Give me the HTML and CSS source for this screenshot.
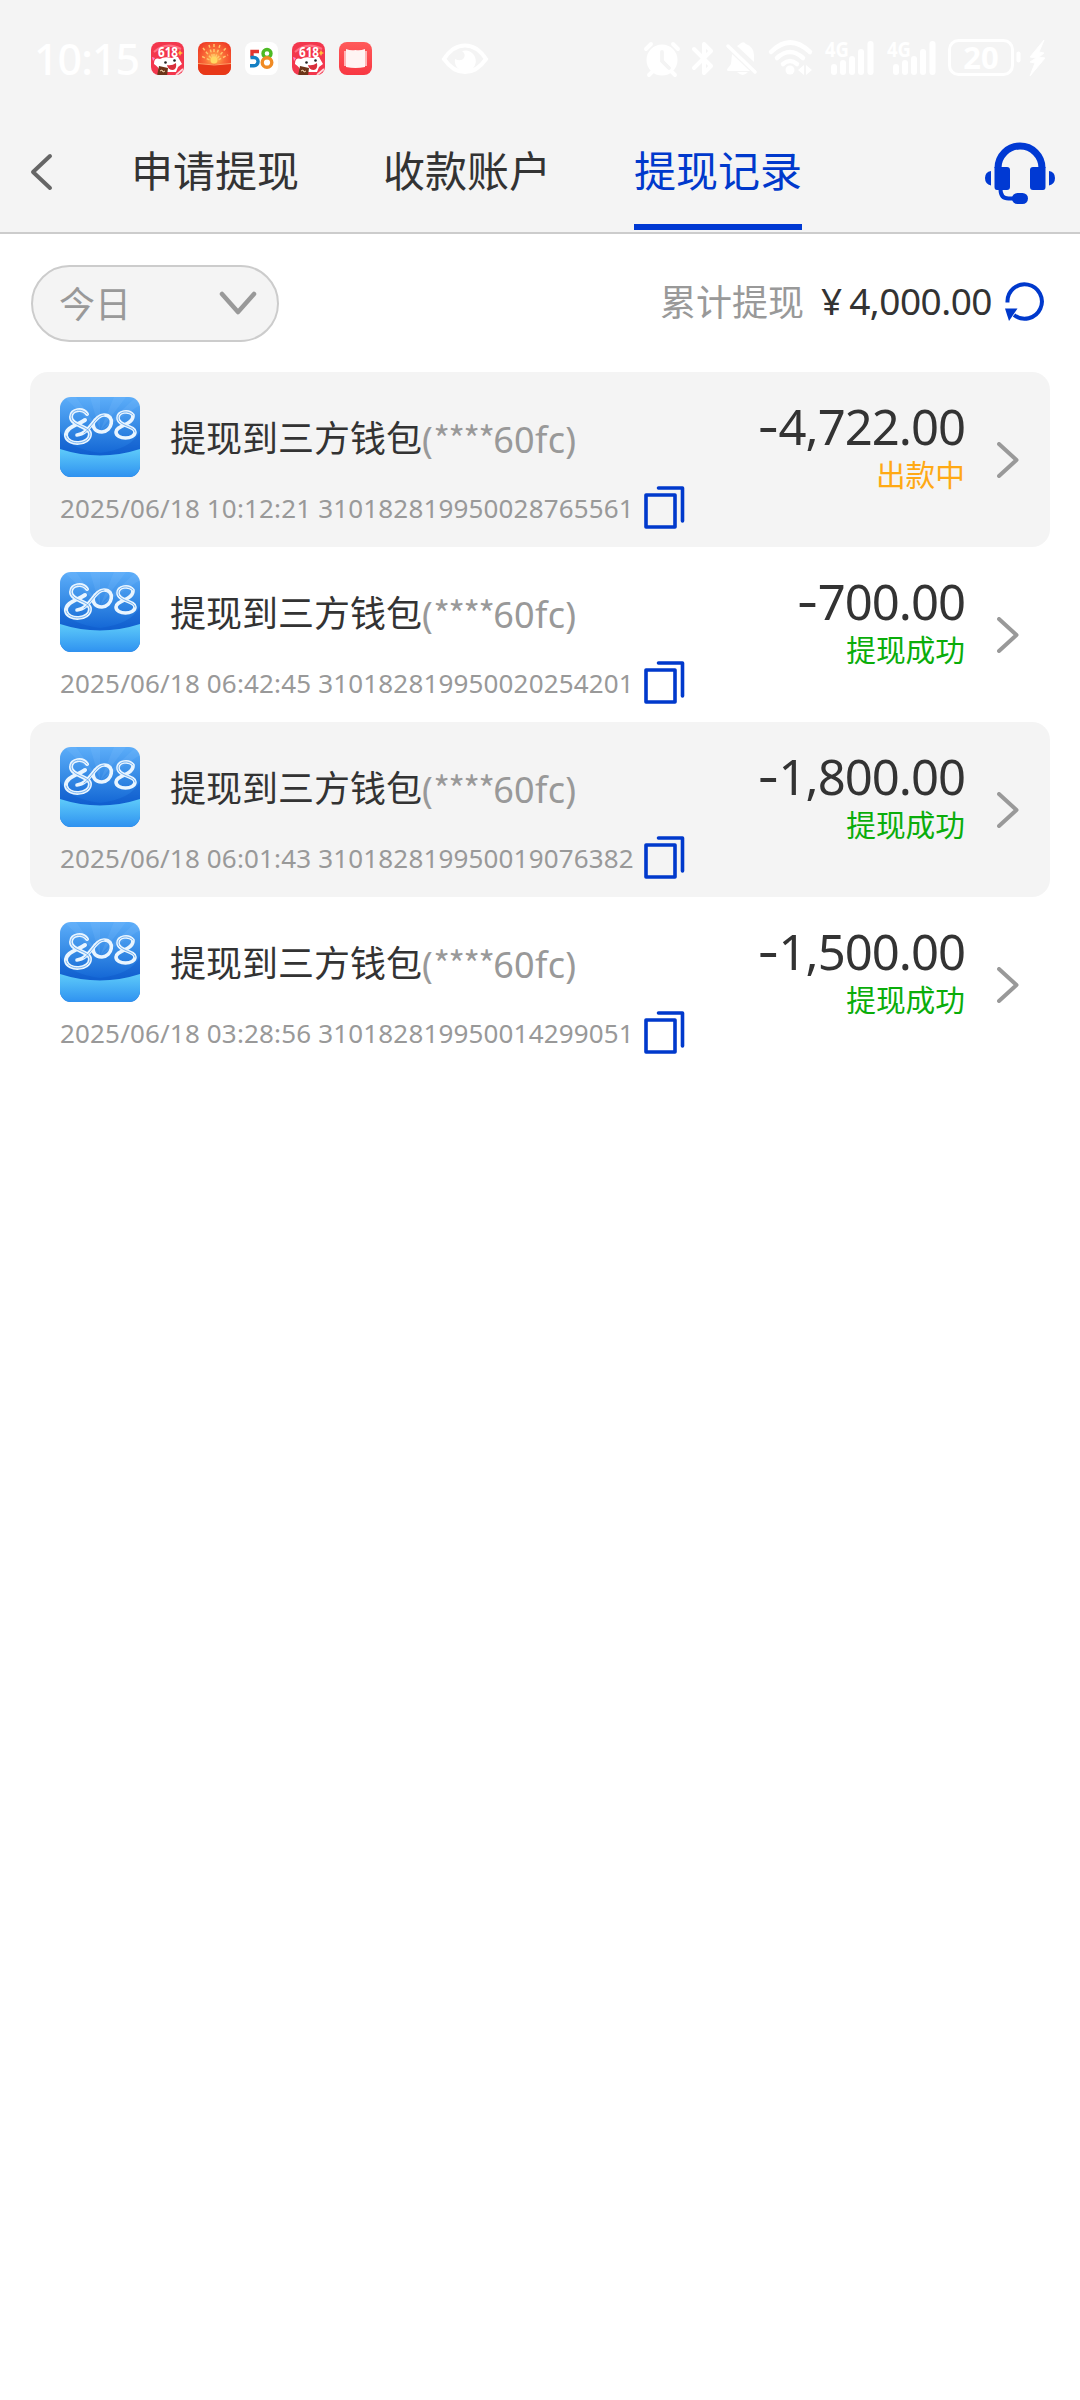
FILE: index.html
```html
<!DOCTYPE html>
<html lang="zh-CN">
<head>
<meta charset="utf-8">
<title>提现记录</title>
<link rel="stylesheet" href="styles.css">
</head>
<body>
<svg class="defs" width="0" height="0" aria-hidden="true">
  <defs>
    <linearGradient id="sky" x1="0" y1="0" x2="0" y2="1"><stop offset="0" stop-color="#5cadf9"/><stop offset=".4" stop-color="#3388e4"/><stop offset=".7" stop-color="#1568d6"/><stop offset="1" stop-color="#1568d6"/></linearGradient>
    <linearGradient id="sea" x1="0" y1="0" x2="0" y2="1"><stop offset="0" stop-color="#5ecbfa"/><stop offset="1" stop-color="#2f92f0"/></linearGradient>
    <linearGradient id="red" x1="0" y1="0" x2="0" y2="1"><stop offset="0" stop-color="#ff5a5a"/><stop offset="1" stop-color="#f83742"/></linearGradient>
    <radialGradient id="gold" cx=".5" cy=".5" r=".6"><stop offset="0" stop-color="#ffc04d"/><stop offset=".5" stop-color="#fa6a38"/><stop offset="1" stop-color="#ee3a24"/></radialGradient>
    <clipPath id="tile"><rect width="80" height="80" rx="11"/></clipPath>
    <clipPath id="app"><rect width="33" height="33" rx="8"/></clipPath>
  </defs>
  <symbol id="wallet" viewBox="0 0 80 80">
    <g clip-path="url(#tile)">
      <rect width="80" height="80" fill="url(#sky)"/>
      <path d="M40 34L4 0h12zM40 34L30 0h10zM40 34L54 0h12zM40 34L76 0h4v8z" fill="#8ccaff" opacity=".16"/>
      <path d="M0 34q8 18 40 22Q72 52 80 34v30H0z" fill="#0a50c4" opacity=".3"/>
      <path d="M0 52q40 13 80 0v28H0z" fill="url(#sea)"/>
      <g fill="none" stroke="#e9f5ff" stroke-linecap="round">
        <path d="M27 17c-4-6-16-5-16 3 0 9 19 9 19 17 0 11-22 12-24 2-1-9 12-11 19-16" stroke-width="4"/>
        <path d="M17 38c13-1 17-20 27-20 12 0 8 17-2 17-8 0-11-7-7-12" stroke-width="3.600"/>
        <path d="M73 18c-4-5-15-4-15 3 0 8 17 8 17 14 0 8-19 8-19 0 0-7 18-7 17-17" stroke-width="3.600"/>
        <path d="M27 17c-4-6-16-5-16 3 0 9 19 9 19 17 0 11-22 12-24 2M24 36c7-4 12-18 20-18M73 18c-4-5-15-4-15 3 0 8 17 8 17 14" stroke="#4b98e8" stroke-width=".7"/>
      </g>
    </g>
  </symbol>
  <symbol id="copy" viewBox="0 0 41 43">
    <g fill="none" stroke="#0039cc" stroke-width="3.600" stroke-linecap="round" stroke-linejoin="round"><rect x="2" y="9" width="29" height="32"/><path d="M14.500 2H38.500V35"/></g>
  </symbol>
  <symbol id="chevron" viewBox="0 0 22 36"><path d="M2 2L19.500 18 2 34" fill="none" stroke="#999" stroke-width="4" stroke-linecap="round" stroke-linejoin="round"/></symbol>
  <symbol id="promo" viewBox="0 0 33 33">
    <g clip-path="url(#app)">
      <rect width="33" height="33" fill="#f3374d"/>
      <path d="M3 10Q15-1 30 7" stroke="#ff7082" stroke-width="2" fill="none"/>
      <path d="M3 22q0-7 6-5 4-3 12-1 3-2 6-1l4 7-4 3-2 5H9q-1-5-6-8z" fill="#fff"/>
      <circle cx="14.500" cy="20.500" r="1.300" fill="#222"/><circle cx="23.500" cy="18.500" r="1.300" fill="#222"/>
      <path d="M16 23q5 1 9-2 1 6-3 7-5 0-6-5z" fill="#d9303d"/>
      <path d="M8 24l9 2-1 8H6z" fill="#6b3519"/><path d="M9 29l2-1 1 2 2-1" stroke="#f5d6b0" fill="none"/>
      <path d="M25 33l7-6M29 34l5-4" stroke="#ffd6dc" stroke-width="1.800"/><path d="M29 8l1 2 2 1-2 1-1 2-1-2-1-1 1-1z" fill="#ffc13d"/><path d="M1 15l3 1-2 3" fill="#ff82c9"/>
    </g>
  </symbol>
  <symbol id="bars" viewBox="0 0 50 36">
    <path d="M10 27v5M19 23v9M28 19v13M37 12v20M46.500 4v28" stroke="#fff" stroke-width="6" stroke-linecap="round"/>
  </symbol>
</svg>

<header class="header">
  <div class="status">
    <span class="time">10:15</span>
    <div class="apps">
      <svg width="33" height="33"><use href="#promo"/><text x="7" y="14.500" class="promo-text" textLength="20" lengthAdjust="spacingAndGlyphs">618</text></svg>
      <svg width="33" height="33" viewBox="0 0 33 33"><g clip-path="url(#app)"><rect width="33" height="33" fill="url(#gold)"/><path d="M16 20L5 6M16 20L11 3M16 20V2M16 20l6-17M16 20L28 6M16 20L3 14M16 20l14-7" stroke="#ffc56b" stroke-width="1.500" stroke-dasharray="3 2"/><circle cx="16" cy="18" r="3.500" fill="#ffd761"/><path d="M0 21q16 3 33 0v12H0z" fill="#e83818"/><path d="M0 21.500q16 3 33 0" stroke="#ffa066" fill="none"/></g></svg>
      <svg width="33" height="33" viewBox="0 0 33 33"><rect width="33" height="33" rx="8" fill="#fff"/><g fill="none" stroke-width="3.400"><path d="M14 9.500H7v6" stroke="#e5352f"/><path d="M5.500 15.500H9a4 4 0 0 1 0 8.200H5" stroke="#1580c4"/><circle cx="22" cy="11.500" r="4" stroke="#4dba24"/><circle cx="22" cy="20.500" r="4.800" stroke="#f08b25"/></g></svg>
      <svg width="33" height="33"><use href="#promo"/><text x="7" y="14.500" class="promo-text" textLength="20" lengthAdjust="spacingAndGlyphs">618</text></svg>
      <svg width="33" height="33" viewBox="0 0 33 33"><rect width="33" height="33" rx="8" fill="url(#red)"/><path d="M5 9H28V24H5z" fill="#ffb5b5"/><path d="M7 7q5 2 9.500 1Q21 9 26 7v18q-5 1-9.500 1T7 25z" fill="#fff4f3"/></svg>
    </div>
    <svg class="eye" width="46" height="32" viewBox="0 0 46 32"><path d="M2 16Q11 2.500 23 2.500T44 16Q35 29 23 29T2 16z" fill="none" stroke="#fff" stroke-width="4"/><path d="M20 8a10.500 10.500 0 1 1-7 8q6 3 9-1 2-4-2-7z" fill="#fff"/></svg>
    <div class="indicators">
      <svg class="alarm" width="36" height="36" viewBox="0 0 36 36"><circle cx="18" cy="18" r="15.500" fill="#fff"/><path d="M2 7l5-5M34 7l-5-5M5 33l4-4M31 33l-4-4" stroke="#fff" stroke-width="4" stroke-linecap="round"/><path d="M18 10v9l7 7" fill="none" stroke="#f4f4f4" stroke-width="3.800" stroke-linecap="round"/></svg>
      <svg class="bluetooth" width="22" height="36" viewBox="0 0 22 36"><path d="M2 8l17 17-7 7V3l7 7L2 27" fill="none" stroke="#fff" stroke-width="4" stroke-linecap="round" stroke-linejoin="round"/></svg>
      <svg class="bell" width="32" height="36" viewBox="0 0 32 36"><path d="M2 5l27 26" stroke="#fff" stroke-width="3.500" stroke-linecap="round"/><path d="M6 13l18 17H2q-2-1 0-3l3-4zM11 5q2-1 4-3 3-2 5 1 8 3 8 11v7zM11 31h11q-5 6-11 0z" fill="#fff"/></svg>
      <svg class="wifi" width="46" height="36" viewBox="0 0 46 36"><g fill="none" stroke="#fff" stroke-width="4.500" stroke-linecap="round"><path d="M3 12Q22-7 42 12M9 18q13-12 26 0M15 24q7-6 14 0"/></g><circle cx="22" cy="30" r="4.500" fill="#fff"/><path d="M36 25v10l-6-5zM38 25v10l6-5z" fill="#fff"/></svg>
      <svg class="signal" width="50" height="36"><use href="#bars"/><text x="1" y="17" class="net-text" textLength="24" lengthAdjust="spacingAndGlyphs">4G</text></svg>
      <svg class="signal" width="50" height="36"><use href="#bars"/><text x="1" y="17" class="net-text" textLength="24" lengthAdjust="spacingAndGlyphs">4G</text></svg>
      <svg class="battery" width="73" height="38" viewBox="0 0 73 38"><rect x="1.500" y="1.500" width="63" height="34" rx="9" fill="none" stroke="#fff" stroke-width="3"/><path d="M70.500 14.500v7" stroke="#fff" stroke-width="4" stroke-linecap="round"/><text x="33" y="30" class="battery-text" text-anchor="middle">20</text></svg>
      <svg class="bolt" width="16" height="38" viewBox="0 0 16 38"><path d="M15 1L1 18l6 1-6 4 5 1-5 13 15-18-6-1 5-4-5-1z" fill="#fff" stroke="#fff"/></svg>
    </div>
  </div>
  <nav class="nav">
    <svg class="back" width="23" height="38" viewBox="0 0 23 38"><path d="M20 3L3 19l17 16" fill="none" stroke="#666" stroke-width="4" stroke-linecap="round" stroke-linejoin="round"/></svg>
    <div class="tabs">
      <a class="tab">申请提现</a>
      <a class="tab">收款账户</a>
      <a class="tab active">提现记录</a>
    </div>
    <svg class="support" width="70" height="62" viewBox="0 0 70 62"><path d="M13 26a22 22 0 0 1 44 0" fill="none" stroke="#0039d3" stroke-width="7"/><path d="M9.500 25H22q3 0 3 3v17q0 3-3 3H12q-2.500 0-2.500-3zM60.500 25H48q-3 0-3 3v17q0 3 3 3h10q2.500 0 2.500-3zM6 29v14.500Q0 42 0 36T6 29zM64 29v14.500Q70 42 70 36T64 29z" fill="#0039d3"/><path d="M15.500 47q0 9.500 8 9.500H31" fill="none" stroke="#0039d3" stroke-width="4"/><rect x="27" y="51" width="16" height="11" rx="5.500" fill="#0039d3"/></svg>
  </nav>
</header>

<section class="filter">
  <div class="select"><span>今日</span><svg width="38" height="26" viewBox="0 0 38 26"><path d="M3 3l16 18L35 3" fill="none" stroke="#999" stroke-width="4.500" stroke-linecap="round" stroke-linejoin="round"/></svg></div>
  <div class="total"><span class="total-label">累计提现</span><span class="yen">¥</span><span class="total-value">4,000.00</span>
    <svg class="refresh" width="39" height="39" viewBox="0 0 39 39"><path d="M2.500 20.500A17.200 17.200 0 1 1 9 33" fill="none" stroke="#0039cc" stroke-width="4"/><path d="M0 26.500h12.500L4 39z" fill="#0039cc"/></svg>
  </div>
</section>

<main class="list">
  <article class="record">
    <div class="info">
      <div class="heading"><svg width="80" height="80"><use href="#wallet"/></svg><span class="title">提现到三方钱包</span><span class="account">(<span class="mask">****</span>60fc)</span></div>
      <div class="meta"><span>2025/06/18 10:12:21 310182819950028765561</span><svg width="41" height="43"><use href="#copy"/></svg></div>
    </div>
    <div class="result"><div class="amount"><span class="minus">-</span>4,722.00</div><div class="state pending">出款中</div></div>
    <svg class="more" width="22" height="36"><use href="#chevron"/></svg>
  </article>
  <article class="record">
    <div class="info">
      <div class="heading"><svg width="80" height="80"><use href="#wallet"/></svg><span class="title">提现到三方钱包</span><span class="account">(<span class="mask">****</span>60fc)</span></div>
      <div class="meta"><span>2025/06/18 06:42:45 310182819950020254201</span><svg width="41" height="43"><use href="#copy"/></svg></div>
    </div>
    <div class="result"><div class="amount"><span class="minus">-</span>700.00</div><div class="state">提现成功</div></div>
    <svg class="more" width="22" height="36"><use href="#chevron"/></svg>
  </article>
  <article class="record">
    <div class="info">
      <div class="heading"><svg width="80" height="80"><use href="#wallet"/></svg><span class="title">提现到三方钱包</span><span class="account">(<span class="mask">****</span>60fc)</span></div>
      <div class="meta"><span>2025/06/18 06:01:43 310182819950019076382</span><svg width="41" height="43"><use href="#copy"/></svg></div>
    </div>
    <div class="result"><div class="amount"><span class="minus">-</span>1,800.00</div><div class="state">提现成功</div></div>
    <svg class="more" width="22" height="36"><use href="#chevron"/></svg>
  </article>
  <article class="record">
    <div class="info">
      <div class="heading"><svg width="80" height="80"><use href="#wallet"/></svg><span class="title">提现到三方钱包</span><span class="account">(<span class="mask">****</span>60fc)</span></div>
      <div class="meta"><span>2025/06/18 03:28:56 310182819950014299051</span><svg width="41" height="43"><use href="#copy"/></svg></div>
    </div>
    <div class="result"><div class="amount"><span class="minus">-</span>1,500.00</div><div class="state">提现成功</div></div>
    <svg class="more" width="22" height="36"><use href="#chevron"/></svg>
  </article>
</main>
</body>
</html>
```

FILE: styles.css
```css
* { box-sizing: border-box; }
body {
  margin: 0;
  min-height: 2400px;
  background: #fff;
  color: #333;
  font-family: "Noto Sans", "Noto Sans CJK SC", sans-serif;
}
svg { display: block; flex: none; overflow: visible; }
.defs { position: absolute; }

.header { height: 234px; background: #f4f4f4; border-bottom: 2px solid #ccc; }

.status { display: flex; height: 112px; padding: 0 35px 0 34px; align-items: flex-start; color: #fff; }
.time { width: 117px; margin-top: 30px; font-size: 43px; line-height: 58px; font-weight: 500; letter-spacing: -1px; white-space: nowrap; }
.apps { display: flex; gap: 14px; margin-top: 42px; }
.eye { margin: 43px 0 0 70px; }
.indicators { display: flex; margin: 40px 0 0 156px; }
.alarm { margin-top: 2px; }
.bluetooth { margin: 1px 0 0 12px; }
.bell { margin: 1px 0 0 12px; }
.wifi { margin: 0 0 0 10px; }
.signal { margin: 0 0 0 10px; }
.signal + .signal { margin-left: 12px; }
.battery { margin: -1px 0 0 12px; }
.bolt { margin: -1px 0 0 8px; }
.promo-text { font: 700 14px "Noto Sans", sans-serif; fill: #fff; }
.net-text { font: 700 22px "Noto Sans", sans-serif; fill: #fff; }
.battery-text { font: 700 31px "Noto Sans", sans-serif; fill: #fff; }

.nav { display: flex; height: 120px; padding: 0 25px 0 30px; }
.back { margin-top: 41px; }
.tabs { display: flex; gap: 84px; height: 118px; margin-left: 78px; }
.tab {
  width: 168px;
  padding-top: 26px;
  font: 400 42px/62px "Noto Sans CJK SC", sans-serif;
  white-space: nowrap;
}
.tab.active { margin-left: -1px; color: #0039cc; border-bottom: 6px solid #0039d3; }
.support { margin: 30px 0 0 auto; }

.filter { display: flex; justify-content: space-between; height: 138px; padding: 31px 36px 0 31px; }
.select {
  display: flex;
  align-items: center;
  justify-content: space-between;
  width: 248px;
  height: 77px;
  padding: 0 20px 0 26px;
  border: 2px solid #ccc;
  border-radius: 39px;
  background: #f4f4f4;
  color: #999;
  font: 36px/50px "Noto Sans CJK SC", sans-serif;
}
.select span { margin-bottom: 4px; }
.total { display: flex; height: 73px; align-items: center; font-size: 37px; white-space: nowrap; }
.total-label { margin-bottom: 3px; font: 36px/50px "Noto Sans CJK SC", sans-serif; color: #999; }
.yen { margin-left: 17px; margin-bottom: 2px; font-size: 37px; }
.total-value { margin-left: 7px; margin-bottom: 2px; letter-spacing: -0.5px; }
.refresh { margin-left: 13px; }

.list { padding: 0 30px; }
.record { display: flex; height: 175px; padding: 25px 31px 0 30px; border-radius: 18px; }
.record:nth-child(odd) { background: #f4f4f4; }
.info { width: 630px; }
.heading { display: flex; align-items: center; height: 80px; font-size: 36px; white-space: nowrap; }
.title { margin: 0 0 3px 30px; font-family: "Noto Sans CJK SC", sans-serif; }
.account { color: #999; letter-spacing: 0.3px; }
.mask { font-family: "Noto Sans CJK SC", sans-serif; letter-spacing: -1.8px; }
.meta { display: flex; align-items: center; height: 43px; margin-top: 9px; color: #999; font-size: 26px; letter-spacing: 0.16px; white-space: nowrap; }
.meta span { width: 584px; }
.result { flex: 1; text-align: right; }
.amount { margin-top: 4px; font-size: 49px; line-height: 50px; letter-spacing: -1px; white-space: nowrap; }
.minus { font-family: Inter, sans-serif; line-height: 1; }
.state { color: #0aad0a; font: 29.7px/44px "Noto Sans CJK SC", sans-serif; }
.pending { color: #ffa914; }
.more { margin: 45px 0 0 32px; }
```
